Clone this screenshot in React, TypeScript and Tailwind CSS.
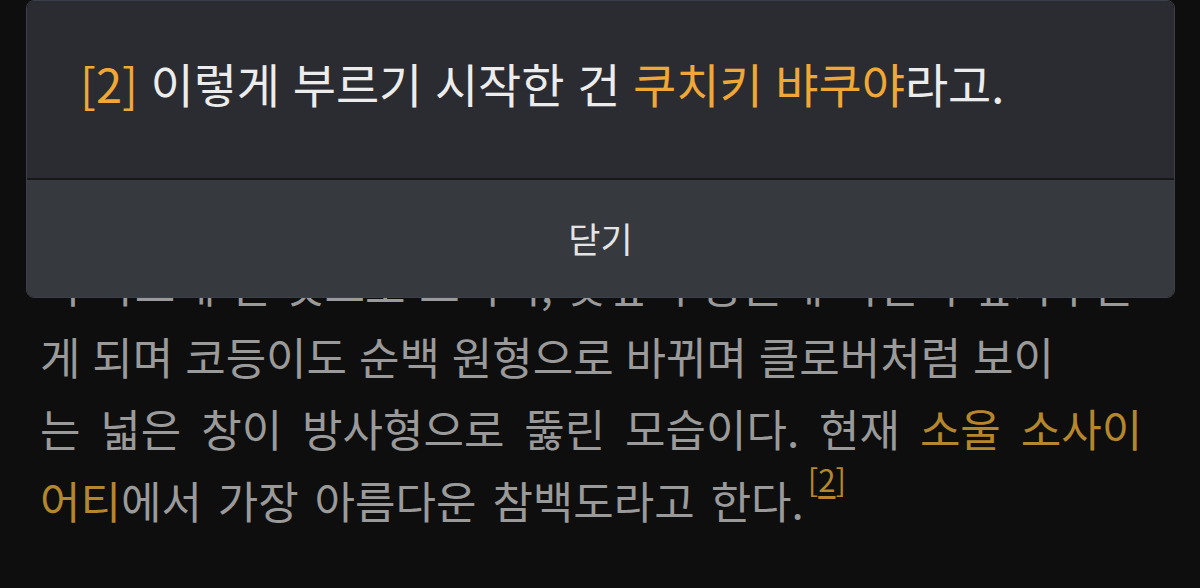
import React from 'react';

const font = { fontFamily: '"Noto Sans CJK KR", "Noto Sans", sans-serif' };

const App: React.FC = () => {
  return (
    <div className="relative min-h-screen h-[588px] overflow-hidden bg-[#0e0e0e]" style={font}>
      {/* article text behind the popup */}
      <div className="px-[40px] pt-[248px] text-[44px] leading-[72px] text-[#9a9a9a] whitespace-nowrap">
        <p className="[word-spacing:4px]">이 나오게 된 것으로 보이며, 꽃잎이 둥글게 되면서 잎자루는</p>
        <p className="[word-spacing:2px]">게 되며 코등이도 순백 원형으로 바뀌며 클로버처럼 보이</p>
        <p className="[word-spacing:10px]">
          는 넓은 창이 방사형으로 뚫린 모습이다. 현재 <span className="text-[#b5862c]">소울 소사이</span>
        </p>
        <p className="[word-spacing:6px]">
          <span className="text-[#b5862c]">어티</span>에서 가장 아름다운 참백도라고 한다.
          <sup className="text-[31px] text-[#b5862c] align-[12px] ml-[4px] [word-spacing:0]">
            [<span className="underline underline-offset-4">2</span>]
          </sup>
        </p>
      </div>

      {/* footnote popup */}
      <div className="absolute top-0 left-[26px] right-[25px] h-[298px] rounded-lg overflow-hidden border border-[#3b3f49] flex flex-col">
        <div className="h-[177px] bg-[#2b2c31] px-[53px] pt-[52px] text-[47px] leading-[60px] text-[#ececec] whitespace-nowrap [word-spacing:2px]">
          <span className="text-[#f0a735]">[2]</span> 이렇게 부르기 시작한 건{' '}
          <span className="text-[#f0a735]">쿠치키 뱌쿠야</span>라고.
        </div>
        <div className="h-[2px] bg-[#17181a]" />
        <div className="flex-1 bg-[#36393e] flex items-center justify-center text-[35px] text-[#e4e4e4]">
          닫기
        </div>
      </div>
    </div>
  );
};

export default App;
